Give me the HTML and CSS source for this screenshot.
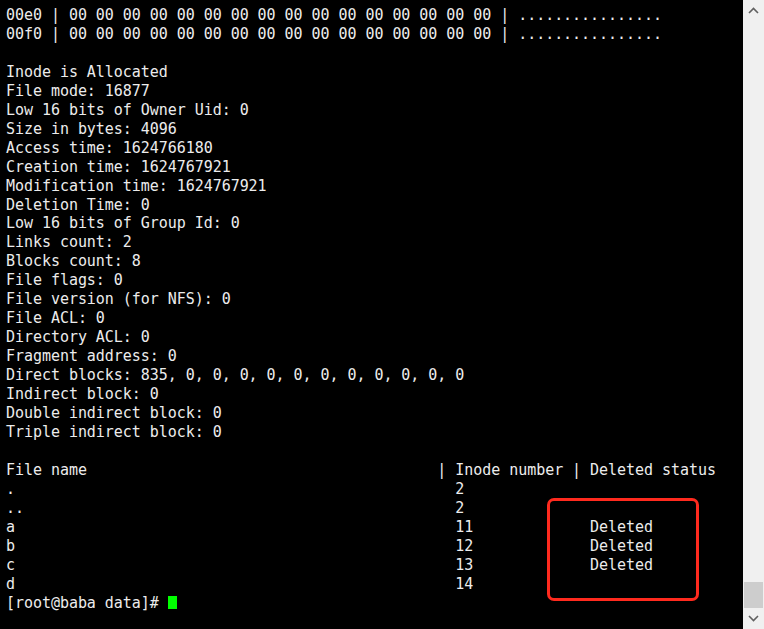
FILE: index.html
```html
<!DOCTYPE html>
<html>
<head>
<meta charset="utf-8">
<link rel="stylesheet" href="styles.css">
</head>
<body>
<div class="window">
  <div class="terminal">
<pre class="output">00e0 | 00 00 00 00 00 00 00 00 00 00 00 00 00 00 00 00 | ................
00f0 | 00 00 00 00 00 00 00 00 00 00 00 00 00 00 00 00 | ................

Inode is Allocated
File mode: 16877
Low 16 bits of Owner Uid: 0
Size in bytes: 4096
Access time: 1624766180
Creation time: 1624767921
Modification time: 1624767921
Deletion Time: 0
Low 16 bits of Group Id: 0
Links count: 2
Blocks count: 8
File flags: 0
File version (for NFS): 0
File ACL: 0
Directory ACL: 0
Fragment address: 0
Direct blocks: 835, 0, 0, 0, 0, 0, 0, 0, 0, 0, 0, 0
Indirect block: 0
Double indirect block: 0
Triple indirect block: 0

File name                                       | Inode number | Deleted status
.                                                 2
..                                                2
a                                                 11             Deleted
b                                                 12             Deleted
c                                                 13             Deleted
d                                                 14
[root@baba data]# <span class="cursor"> </span></pre>
    <div class="mark"></div>
  </div>
  <div class="scrollbar">
    <div class="arrow">
      <svg width="11" height="7" viewBox="0 0 11 7"><path d="M1 6 L5.5 1.5 L10 6" fill="none" stroke="#606060" stroke-width="1.6"/></svg>
    </div>
    <div class="track"><div class="thumb"></div></div>
    <div class="arrow">
      <svg width="11" height="7" viewBox="0 0 11 7"><path d="M1 1 L5.5 5.5 L10 1" fill="none" stroke="#606060" stroke-width="1.6"/></svg>
    </div>
  </div>
</div>
</body>
</html>
```

FILE: styles.css
```css
html, body {
  margin: 0;
  padding: 0;
  background: #000;
}
.window {
  display: flex;
  width: 764px;
  height: 629px;
  overflow: hidden;
}
.terminal {
  position: relative;
  flex: 1;
  background: #000;
  padding: 6px 0 0 6px;
}
.output {
  margin: 0;
  font-family: "DejaVu Sans Mono", monospace;
  font-size: 15px;
  line-height: 18.95px;
  letter-spacing: -0.045px;
  color: #ececec;
}
.cursor {
  background: #00ff00;
  display: inline-block;
  width: 9px;
  height: 13px;
  vertical-align: -2px;
}
.mark {
  position: absolute;
  left: 547px;
  top: 498px;
  width: 146px;
  height: 97px;
  border: 3px solid #ff2a1e;
  border-radius: 7px;
}
.scrollbar {
  width: 21px;
  background: #f0f0f0;
  display: flex;
  flex-direction: column;
}
.arrow {
  height: 21px;
  display: flex;
  align-items: center;
  justify-content: center;
}
.track {
  flex: 1;
  display: flex;
  flex-direction: column;
  justify-content: flex-end;
  padding: 0 1px;
}
.thumb {
  height: 26px;
  background: #cdcdcd;
}
```
